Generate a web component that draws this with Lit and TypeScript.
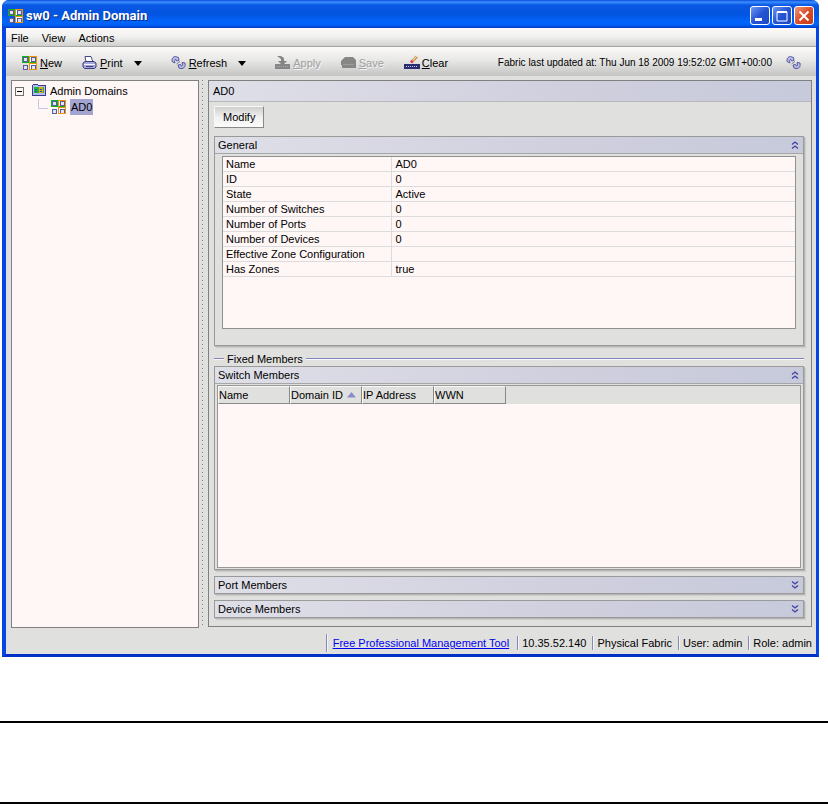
import { LitElement, html, css, svg } from "lit";
import { customElement, property, state } from "lit/decorators.js";

const domainIcon = html`<svg width="16" height="16" viewBox="0 0 16 16" shape-rendering="crispEdges" aria-hidden="true">
  <rect x="0.500" y="1.500" width="14" height="6" fill="#fff" stroke="#10b020"/>
  <path d="M6.500 2V8" stroke="#10b020"/>
  <rect x="7" y="1" width="8" height="14" fill="#fff"/>
  ${[[1, 2], [9, 2], [1, 10], [9, 10]].map(
    ([x, y]) => svg`<rect x=${x + 0.5} y=${y + 0.5} width="4" height="4" fill="#e0e4ff" stroke="#5c5c98"/>`
  )}
  <rect x="7.500" y="1.500" width="7" height="13" fill="none" stroke="#f0940c"/>
  <path d="M8 7.500H14" stroke="#10b020"/><path d="M8 8.500H14" stroke="#f0940c"/>
</svg>`;

const printIcon = html`<svg width="16" height="16" viewBox="0 0 16 16" aria-hidden="true">
  <path d="M4 7L3 1.500H9L11 7Z" fill="#fff" stroke="#4a4a88"/>
  <path d="M1 8L3 6.500H12L14 8V12L12.500 13.500H2.500L1 12Z" fill="#a4a8d8" stroke="#3a3a7c"/>
  <path d="M2 9.500H13" stroke="#f4f4ff"/><path d="M4 11.500H11" stroke="#3a3a7c"/>
</svg>`;

const refreshIcon = html`<svg width="16" height="16" viewBox="0 0 16 16" aria-hidden="true">
  <path d="M1 6.500C.5 3 3 .8 5.500 1.800L7.500 2.500L8 5.500L5.500 6L4.800 4.500C3.500 4.500 3.200 5.500 4 8Z" fill="#b8bce8" stroke="#4c4c94" stroke-width=".9"/>
  <path d="M14 8C14.800 11.500 13 13.800 10 13.500L8 13L7 10L9.500 9.500L10.300 11C11.500 11 11.800 9.800 11 7.500Z" fill="#b8bce8" stroke="#4c4c94" stroke-width=".9"/>
  <path d="M5.500 9L9 6.500" stroke="#7c7cb8"/>
</svg>`;

const applyIcon = html`<svg width="16" height="16" viewBox="0 0 16 16" aria-hidden="true">
  <rect x="0" y="9" width="15" height="5" fill="#868686"/>
  <path d="M2 1H6L9 3V6H12L7.500 10.500L3 6H6V4Z" fill="#868686"/>
  <path d="M2 11.500H13" stroke="#a8a8a8" stroke-dasharray="1 1"/>
</svg>`;

const saveIcon = html`<svg width="16" height="16" viewBox="0 0 16 16" aria-hidden="true">
  <path d="M0 6L4 2H12L15 5V13H1V10H0Z" fill="#868686"/>
  <path d="M2 9.500H13" stroke="#9c9c9c"/>
</svg>`;

const clearIcon = html`<svg width="16" height="16" viewBox="0 0 16 16" aria-hidden="true">
  <rect x="0" y="9" width="16" height="5" fill="#2c2c70"/>
  <path d="M2 11.500H14" stroke="#c8c8f0" stroke-dasharray="1 1"/>
  <path d="M8.500 6L13 1.500" stroke="#c89858" stroke-width="3"/>
  <path d="M9 5L13 1" stroke="#ffe0a0"/>
  <path d="M7 7.500L8.500 6" stroke="#e83050" stroke-width="3"/>
</svg>`;

const folderIcon = html`<svg width="16" height="16" viewBox="0 0 16 16" shape-rendering="crispEdges" aria-hidden="true">
  <path d="M1.500 12.500V2.500L2.500 1.500H6.500L7.500 2.500H14.500V12.500Z" fill="#b4bcf4" stroke="#3c3c8c"/>
  <rect x="3" y="4" width="10" height="6" fill="#18b838"/>
  <rect x="8" y="4" width="4" height="6" fill="#f0a018"/>
  <path d="M4 6h2v1H4zM9 6h2v1H9zM4 8h2v1H4zM9 8h2v1H9z" fill="#2848c0"/>
</svg>`;

const chevrons = (down: boolean) => html`<svg width="8" height="8" viewBox="0 0 8 8" aria-hidden="true">
  <path d=${down ? "M1 .5L4 3L7 .5M1 4.500L4 7L7 4.500" : "M1 3.500L4 1L7 3.500M1 7.500L4 5L7 7.500"}
    fill="none" stroke="#4040a0" stroke-width="1.300"/>
</svg>`;

@customElement("member-panel")
export class MemberPanel extends LitElement {
  @property() heading = "";
  @property({ type: Boolean, reflect: true }) open = false;

  static styles = css`
    :host {
      display: block;
      border: 1px solid #9a9a9a;
      box-shadow: 1px 1px 0 #b4b4b4, 2px 2px 1px #cfcfcd;
    }
    .bar {
      display: flex;
      align-items: center;
      justify-content: space-between;
      width: 100%;
      height: 16px;
      padding: 0 4px 0 3px;
      border: 0;
      background: linear-gradient(90deg, #dfdfe8, #d0cfde 60%, #c6cadb);
      color: #000;
      font: inherit;
      text-align: left;
    }
    :host([open]) .bar {
      height: 17px;
      border-bottom: 1px solid #a6a6a8;
    }
  `;

  render() {
    return html`<button class="bar" aria-expanded=${this.open} @click=${() => (this.open = !this.open)}>
        <span>${this.heading}</span>${chevrons(!this.open)}
      </button>
      ${this.open ? html`<slot></slot>` : null}`;
  }
}

@customElement("app-root")
export class AppRoot extends LitElement {
  @state() private properties: [string, string][] = [
    ["Name", "AD0"],
    ["ID", "0"],
    ["State", "Active"],
    ["Number of Switches", "0"],
    ["Number of Ports", "0"],
    ["Number of Devices", "0"],
    ["Effective Zone Configuration", ""],
    ["Has Zones", "true"],
  ];

  static styles = css`
    :host {
      display: block;
      background: #fff;
      color: #000;
      font: 11px/14px "Liberation Sans", Arial, sans-serif;
    }
    * {
      box-sizing: border-box;
    }
    button {
      font: inherit;
      color: inherit;
      border: 0;
      padding: 0;
      background: none;
      white-space: nowrap;
    }
    svg {
      display: block;
      flex: none;
    }
    .window {
      margin: 0 9px 0 2px;
      border: solid #0846e4;
      border-width: 0 3px 3px 4px;
      border-bottom-color: #0030c8;
      border-radius: 7px 7px 0 0;
      background: #e0e0de;
    }
    .titlebar {
      display: flex;
      align-items: center;
      gap: 2px;
      height: 28px;
      margin: 0 -3px 0 -4px;
      padding: 3px 5px 0 6px;
      border-radius: 7px 7px 0 0;
      background: linear-gradient(#0848d8, #3c90ff 2px, #0a58e4 5px, #0454e0 14px, #0064fc 22px, #0060f4 25px, #003cc8);
    }
    .titlebar h1 {
      flex: 1;
      margin: 0;
      color: #fff;
      font: bold 13px/16px Roboto, sans-serif;
      text-shadow: 1px 1px 0 #0c2c80;
    }
    .sysbutton {
      display: grid;
      place-items: center;
      width: 20px;
      height: 19px;
      border: 1px solid #fff;
      border-radius: 3px;
      background: linear-gradient(135deg, #6c98f4, #2454d4 50%, #1c48c4);
    }
    .close {
      background: linear-gradient(135deg, #f09878, #dc4c28 50%, #c43c18);
    }
    .menu {
      display: flex;
      gap: 13px;
      height: 19px;
      padding: 3px 5px 0;
      border-bottom: 1px solid #a4a4a4;
      background: linear-gradient(#fcfafa, #f0f0ee 50%, #d0d0ce);
      line-height: 14px;
    }
    .menu button {
      height: 14px;
    }
    .toolbar {
      display: flex;
      align-items: center;
      gap: 20px;
      height: 29px;
      padding: 3px 14px 0 16px;
      background: linear-gradient(#fcfafa, #e8e8e6 45%, #c4c4c4);
    }
    .tool {
      display: flex;
      align-items: center;
      gap: 2px;
    }
    .tool:disabled {
      color: #a0a0a0;
      text-shadow: 1px 1px 0 #f4f4f4;
    }
    .split {
      display: flex;
      align-items: center;
      gap: 11px;
      padding-right: 9px;
    }
    .caret {
      border: solid transparent;
      border-width: 5px 4px 0;
      border-top-color: #000;
    }
    .updated {
      flex: 1;
      font-size: 10px;
      text-align: right;
      white-space: nowrap;
    }
    .sync {
      margin-left: -6px;
    }
    .workspace {
      display: grid;
      grid-template-columns: 188px 9px minmax(0, 1fr);
      padding: 4px 4px 0 5px;
    }
    .tree,
    .detail {
      border: 1px solid #808080;
    }
    .tree {
      background: #fff6f6;
      padding: 2px 3px;
    }
    .tree ul {
      margin: 0;
      padding: 0;
      list-style: none;
    }
    .node {
      display: flex;
      align-items: center;
      height: 16px;
      gap: 3px;
    }
    .toggle {
      display: grid;
      place-items: center;
      width: 9px;
      height: 9px;
      margin-right: 4px;
      border: 1px solid #707070;
    }
    .toggle::after {
      content: "";
      width: 5px;
      height: 1px;
      background: #000;
    }
    .child {
      padding-left: 23px;
    }
    .child::before {
      content: "";
      width: 9px;
      height: 9px;
      align-self: flex-start;
      border: solid #c8c8e0;
      border-width: 0 0 1px 1px;
    }
    .selected {
      padding: 1px;
      background: #a4a4d0;
    }
    .splitter {
      width: 1px;
      margin-left: 3px;
      background: repeating-linear-gradient(#808080 0 1px, #e0e0de 1px 4px);
    }
    .detail {
      background: #e0e0de;
      margin-bottom: 1px;
    }
    .heading {
      height: 21px;
      margin: 0;
      padding: 3px 4px;
      border-bottom: 1px solid #b8b8ba;
      background: linear-gradient(90deg, #dfdfe8, #d0cfde 60%, #c6cadb);
      font: inherit;
    }
    .body {
      padding: 4px 7px 8px 5px;
    }
    .modify {
      display: block;
      height: 22px;
      padding: 0 8px;
      border: 1px solid #f8f8f8;
      border-right-color: #888;
      border-bottom-color: #888;
      background: linear-gradient(#cfcfcd, #f0f0f0 50%, #fcfcfc);
      margin-bottom: 8px;
    }
    .sheet {
      min-height: 173px;
      margin: 2px 7px 16px;
      border: 1px solid #909090;
      background: #fff6f6;
    }
    .sheet table {
      width: 100%;
      height: 118px;
      border-collapse: collapse;
      table-layout: fixed;
    }
    .sheet th,
    .sheet td {
      padding: 1px 4px 0;
      border-bottom: 1px solid #dcdcdf;
      font-weight: normal;
      text-align: left;
      line-height: 13px;
    }
    .sheet th {
      width: 168px;
      padding-left: 3px;
      border-right: 1px solid #dcdcdf;
    }
    fieldset {
      min-width: 0;
      margin: 6px 0 0;
      padding: 0;
      border: 0;
    }
    legend {
      display: flex;
      align-items: center;
      gap: 3px;
      float: left;
      width: 100%;
      padding: 0;
    }
    legend::before,
    legend::after {
      content: "";
      width: 10px;
      height: 2px;
      background: linear-gradient(#8484bc 50%, #f8f8fc 50%);
    }
    legend::after {
      flex: 1;
    }
    .members {
      display: grid;
      gap: 6px;
      clear: both;
    }
    .list {
      height: 183px;
      margin: 1px 2px;
      border: 1px solid #989898;
      background: #fff6f6;
    }
    .rowhead {
      height: 18px;
      background: #e0e0de;
    }
    .list table {
      border-spacing: 0;
      table-layout: fixed;
      width: 288px;
    }
    .list th {
      width: 72px;
      height: 18px;
      padding: 0;
      border: 1px solid #f8f8f8;
      border-right-color: #888;
      border-bottom-color: #888;
      font-weight: normal;
      text-align: left;
      white-space: nowrap;
    }
    .sorted {
      display: flex;
      align-items: center;
      gap: 4px;
    }
    .status {
      display: flex;
      justify-content: flex-end;
      align-items: center;
      height: 26px;
      padding: 4px 4px 0 0;
      white-space: nowrap;
    }
    .status span {
      padding: 0 6px 0 4px;
      border-left: 1px solid #8888b8;
      box-shadow: inset 1px 0 0 #f4f4f8;
    }
    .status .promo {
      padding: 2px 8px 2px 6px;
    }
    .status span:last-child {
      padding-right: 0;
    }
    a {
      color: #0000f0;
    }
    hr {
      height: 2px;
      margin: 64px 0 0;
      border: 0;
      background: #000;
    }
    hr + hr {
      margin-top: 79px;
    }
  `;

  render() {
    return html`
      <main class="window">
        <header class="titlebar">
          ${domainIcon}
          <h1>sw0 - Admin Domain</h1>
          <button class="sysbutton" aria-label="Minimize">
            <svg width="14" height="14"><rect x="2" y="9" width="7" height="3" fill="#fff" /></svg>
          </button>
          <button class="sysbutton" aria-label="Maximize">
            <svg width="14" height="14"><path d="M2 3H12V12H2Z" fill="none" stroke="#fff" /><path d="M2 3H12" stroke="#fff" stroke-width="2" /></svg>
          </button>
          <button class="sysbutton close" aria-label="Close">
            <svg width="14" height="14"><path d="M2.500 2.500L11.500 11.500M11.500 2.500L2.500 11.500" stroke="#fff" stroke-width="2" /></svg>
          </button>
        </header>
        <nav class="menu">
          <button>File</button><button>View</button><button>Actions</button>
        </nav>
        <div class="toolbar">
          <button class="tool">${domainIcon}<span><u>N</u>ew</span></button>
          <div class="split">
            <button class="tool">${printIcon}<span><u>P</u>rint</span></button>
            <button class="caret" aria-label="Print options"></button>
          </div>
          <div class="split">
            <button class="tool">${refreshIcon}<span><u>R</u>efresh</span></button>
            <button class="caret" aria-label="Refresh options"></button>
          </div>
          <button class="tool" disabled>${applyIcon}<span><u>A</u>pply</span></button>
          <button class="tool" disabled>${saveIcon}<span><u>S</u>ave</span></button>
          <button class="tool">${clearIcon}<span><u>C</u>lear</span></button>
          <span class="updated">Fabric last updated at: Thu Jun 18 2009 19:52:02 GMT+00:00</span>
          <button class="sync" aria-label="Refresh fabric">${refreshIcon}</button>
        </div>
        <div class="workspace">
          <nav class="tree">
            <ul>
              <li>
                <div class="node"><button class="toggle" aria-label="Collapse"></button>${folderIcon}<span>Admin Domains</span></div>
                <ul>
                  <li class="node child">${domainIcon}<span class="selected">AD0</span></li>
                </ul>
              </li>
            </ul>
          </nav>
          <div class="splitter"></div>
          <section class="detail">
            <h2 class="heading">AD0</h2>
            <div class="body">
              <button class="modify">Modify</button>
              <member-panel heading="General" open>
                <div class="sheet">
                  <table>
                    ${this.properties.map(([name, value]) => html`<tr><th scope="row">${name}</th><td>${value}</td></tr>`)}
                  </table>
                </div>
              </member-panel>
              <fieldset>
                <legend>Fixed Members</legend>
                <div class="members">
                  <member-panel heading="Switch Members" open>
                    <div class="list">
                      <div class="rowhead">
                        <table>
                          <thead>
                            <tr>
                              <th>Name</th>
                              <th aria-sort="ascending">
                                <div class="sorted">Domain ID
                                  <svg width="9" height="6"><path d="M0 5.500L4.500 0L9 5.500Z" fill="#8c8cc8" /></svg>
                                </div>
                              </th>
                              <th>IP Address</th>
                              <th>WWN</th>
                            </tr>
                          </thead>
                        </table>
                      </div>
                    </div>
                  </member-panel>
                  <member-panel heading="Port Members"></member-panel>
                  <member-panel heading="Device Members"></member-panel>
                </div>
              </fieldset>
            </div>
          </section>
        </div>
        <footer class="status">
          <span class="promo"><a href="#tool">Free Professional Management Tool</a></span>
          <span>10.35.52.140</span>
          <span>Physical Fabric</span>
          <span>User: admin</span>
          <span>Role: admin</span>
        </footer>
      </main>
      <hr />
      <hr />
    `;
  }
}
